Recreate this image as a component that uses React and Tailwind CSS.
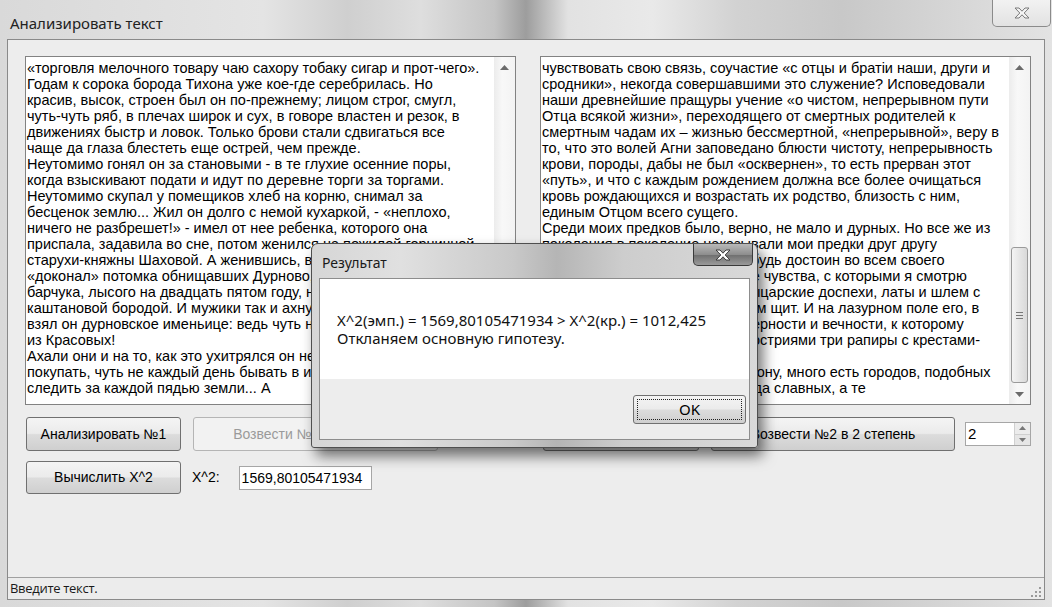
import React from "react";

// text shown in the two text boxes, one entry per visual line
const leftLines = [
  "«торговля мелочного товару чаю сахору тобаку сигар и прот-чего».",
  "Годам к сорока борода Тихона уже кое-где серебрилась. Но",
  "красив, высок, строен был он по-прежнему; лицом строг, смугл,",
  "чуть-чуть ряб, в плечах широк и сух, в говоре властен и резок, в",
  "движениях быстр и ловок. Только брови стали сдвигаться все",
  "чаще да глаза блестеть еще острей, чем прежде.",
  "Неутомимо гонял он за становыми - в те глухие осенние поры,",
  "когда взыскивают подати и идут по деревне торги за торгами.",
  "Неутомимо скупал у помещиков хлеб на корню, снимал за",
  "бесценок землю... Жил он долго с немой кухаркой, - «неплохо,",
  "ничего не разбрешет!» - имел от нее ребенка, которого она",
  "приспала, задавила во сне, потом женился на пожилой горничной",
  "старухи-княжны Шаховой. А женившись, взял приданое,",
  "«доконал» потомка обнищавших Дурново, ожиревшего",
  "барчука, лысого на двадцать пятом году, но с великолепной",
  "каштановой бородой. И мужики так и ахнули, когда",
  "взял он дурновское именьице: ведь чуть не вся Дурновка",
  "из Красовых!",
  "Ахали они и на то, как это ухитрялся он не только торговать и",
  "покупать, чуть не каждый день бывать в имении, но и",
  "следить за каждой пядью земли... А",
];

const rightLines = [
  "чувствовать свою связь, соучастие «с отцы и братіи наши, други и",
  "сродники», некогда совершавшими это служение? Исповедовали",
  "наши древнейшие пращуры учение «о чистом, непрерывном пути",
  "Отца всякой жизни», переходящего от смертных родителей к",
  "смертным чадам их – жизнью бессмертной, «непрерывной», веру в",
  "то, что это волей Агни заповедано блюсти чистоту, непрерывность",
  "крови, породы, дабы не был «осквернен», то есть прерван этот",
  "«путь», и что с каждым рождением должна все более очищаться",
  "кровь рождающихся и возрастать их родство, близость с ним,",
  "единым Отцом всего сущего.",
  "Среди моих предков было, верно, не мало и дурных. Но все же из",
  "поколения в поколение наказывали мои предки друг другу",
  "помнить и блюсти свою кровь: будь достоин во всем своего",
  "благородства… Знаете ли вы те чувства, с которыми я смотрю",
  "на наш старый родной герб? Рыцарские доспехи, латы и шлем с",
  "страусовыми перьями, а под ним щит. И на лазурном поле его, в",
  "середине – перстень, символ верности и вечности, к которому",
  "сходятся сверху, снизу своими остриями три рапиры с крестами-",
  "рукоятями.",
  "Есть на Руси, в ту степную сторону, много есть городов, подобных",
  "нашему, стариной и величием, да славных, а те",
];

const Arrow = ({ down }) => (
  <svg width="9" height="5" viewBox="0 0 9 5">
    <path d={down ? "M0 0H9L4.5 5Z" : "M0 5H9L4.5 0Z"} fill="#6b6b6b" />
  </svg>
);

function Scrollbar({ grip }) {
  return (
    <div className="w-[21px] flex flex-col bg-[linear-gradient(90deg,#ececec,#f8f8f8_40%,#f3f3f3)]">
      <div className="h-[21px] flex items-center justify-center">
        <Arrow />
      </div>
      <div className="flex-1 flex flex-col px-[2px]">
        <div className="h-[169px]" />
        <div className="h-[136px] rounded-[3px] border border-[#9a9a9a] bg-[linear-gradient(90deg,#f4f4f4,#e6e6e6_50%,#d9d9d9)] flex items-center justify-center">
          {grip && (
            <div className="flex flex-col gap-[2px]">
              <div className="w-[7px] h-px bg-[#777]" />
              <div className="w-[7px] h-px bg-[#777]" />
              <div className="w-[7px] h-px bg-[#777]" />
            </div>
          )}
        </div>
      </div>
      <div className="h-[20px] flex items-center justify-center">
        <Arrow down />
      </div>
    </div>
  );
}

function TextBox({ lines, grip }) {
  return (
    <div className="h-[349px] flex border border-[#828282] bg-white">
      <div className="flex-1 overflow-hidden pl-[1px] pt-[3px] text-[14.5px] leading-[16px] text-black">
        {lines.map((l, i) => (
          <div key={i} className="whitespace-nowrap h-[16px]">
            {l}
          </div>
        ))}
      </div>
      <Scrollbar grip={grip} />
    </div>
  );
}

function WinButton({ children, disabled, className }) {
  return (
    <div
      className={
        "flex items-center justify-center rounded-[3px] border text-[14px] " +
        (disabled
          ? "border-[#b5b5b5] bg-[#f2f2f2] text-[#9a9a9a] "
          : "border-[#707070] bg-[linear-gradient(180deg,#f4f4f4_0%,#ebebeb_48%,#dcdcdc_52%,#cfcfcf_100%)] text-black ") +
        className
      }
    >
      {children}
    </div>
  );
}

function Spinner({ value }) {
  return (
    <div className="w-[66px] h-[24px] flex border border-[#a6a6a6] bg-white self-center">
      <div className="flex-1 pl-[2px] text-[15px] leading-[22px]">{value}</div>
      <div className="w-[16px] flex flex-col border-l border-[#d0d0d0]">
        <div className="flex-1 flex items-center justify-center bg-[#ececec] border-b border-[#cfcfcf]">
          <svg width="7" height="4" viewBox="0 0 7 4"><path d="M0 4H7L3.5 0Z" fill="#777" /></svg>
        </div>
        <div className="flex-1 flex items-center justify-center bg-[#e6e6e6]">
          <svg width="7" height="4" viewBox="0 0 7 4"><path d="M0 0H7L3.5 4Z" fill="#777" /></svg>
        </div>
      </div>
    </div>
  );
}

function CloseGlyph({ solid }) {
  return (
    <svg width="16" height="12" viewBox="0 0 16 12">
      <path
        d="M1 1H5L8 4.2L11 1H15L10.2 6L15 11H11L8 7.8L5 11H1L5.8 6Z"
        fill={solid ? "#ffffff" : "#f4f4f4"}
        stroke={solid ? "#3d3d3d" : "#7a7a7a"}
        strokeWidth="1"
        strokeLinejoin="round"
      />
    </svg>
  );
}

function ResultDialog() {
  return (
    <div className="absolute left-[311px] top-[243px] w-[447px] h-[205px] rounded-t-[7px] rounded-b-[3px] border border-[#4f4f4f] bg-[linear-gradient(90deg,#d6d6d6,#e0e0e0_20%,#c9c9c9_45%,#b5b5b5_55%,#cdcdcd_70%,#d9d9d9)] shadow-[5px_8px_14px_rgba(0,0,0,0.55)] flex flex-col px-[7px] pb-[7px] font-['Noto_Sans',sans-serif]">
      <div className="h-[34px] flex items-start">
        <div className="pt-[8px] pl-[3px] text-[14px] text-[#1a1a1a] flex-1">Результат</div>
        <div className="w-[60px] h-[22px] -mr-[3px] rounded-b-[5px] border border-t-0 border-[#3a3a3a] bg-[linear-gradient(180deg,#b9b9b9,#8e8e8e_50%,#6f6f6f_52%,#9a9a9a)] flex items-center justify-center">
          <CloseGlyph solid />
        </div>
      </div>
      <div className="flex-1 flex flex-col border border-[#8d8d8d]">
        <div className="h-[100px] bg-white px-[17px] pt-[32px] text-[15px] leading-[18px] text-[#111]">
          <div className="whitespace-nowrap">X^2(эмп.) = 1569,80105471934 &gt; X^2(кр.) = 1012,425</div>
          <div className="whitespace-nowrap">Откланяем основную гипотезу.</div>
        </div>
        <div className="flex-1 bg-[#ededed] flex justify-end items-start pt-[16px] pr-[3px]">
          <WinButton className="w-[113px] h-[29px] relative">
            <div className="absolute inset-[3px] border border-dotted border-[#222]" />
            <span className="font-['Noto_Sans',sans-serif] text-[15px]">OK</span>
          </WinButton>
        </div>
      </div>
    </div>
  );
}

export default function App() {
  return (
    <div className="w-[1052px] h-[607px] relative overflow-hidden flex flex-col bg-[linear-gradient(90deg,#d9d9d9,#e4e4e4_25%,#cfcfcf_33%,#dedede_40%,#c4c4c4_47%,#9d9d9d_50%,#e2e2e2_54%,#e9e9e9_62%,#d2d2d2_70%,#c8c8c8_80%,#d8d8d8_92%,#e3e3e3)] font-['Liberation_Sans',Arial,sans-serif]">
      {/* title bar */}
      <div className="h-[39px] flex items-start">
        <div className="flex-1 pl-[10px] pt-[12px] text-[15px] text-[#222] font-['Noto_Sans',sans-serif]">
          Анализировать текст
        </div>
        <div className="w-[59px] h-[27px] mr-[1px] rounded-b-[5px] border border-t-0 border-[#8b8b8b] bg-[linear-gradient(180deg,#f2f2f2,#e2e2e2)] flex items-center justify-center">
          <CloseGlyph />
        </div>
      </div>

      {/* client area */}
      <div className="flex-1 mx-[7px] mb-[7px] flex flex-col border border-[#8a8a8a] bg-[#ededed]">
        <div className="flex-1 px-[17px] pt-[16px]">
          <div className="grid grid-cols-[491px_491px] gap-x-[24px]">
            <TextBox lines={leftLines} />
            <TextBox lines={rightLines} grip />
          </div>

          <div className="grid grid-cols-[491px_491px] gap-x-[24px] mt-[12px]">
            <div className="flex h-[34px] pl-[1px]">
              <WinButton className="w-[155px]">Анализировать №1</WinButton>
              <WinButton disabled className="w-[245px] ml-[12px]">Возвести №1 в 2 степень</WinButton>
              <div className="ml-[10px] flex">
                <Spinner value="2" />
              </div>
            </div>
            <div className="flex h-[34px] pl-[3px]">
              <WinButton className="w-[156px]">Анализировать №2</WinButton>
              <WinButton className="w-[244px] ml-[12px]">Возвести №2 в 2 степень</WinButton>
              <div className="ml-[10px] flex">
                <Spinner value="2" />
              </div>
            </div>
          </div>

          <div className="flex items-center mt-[10px] pl-[1px] h-[33px]">
            <WinButton className="w-[155px] h-[33px]">Вычислить X^2</WinButton>
            <div className="ml-[11px] text-[14px]">X^2:</div>
            <div className="ml-[19px] w-[133px] h-[24px] border border-[#a6a6a6] bg-white text-[14px] leading-[22px] pl-[2px]">
              1569,80105471934
            </div>
          </div>
        </div>

        {/* status bar */}
        <div className="h-[22px] border-t border-[#a0a0a0] bg-[#ececec] flex items-center justify-between pl-[2px] pr-[3px]">
          <div className="text-[13px] text-[#1a1a1a] font-['Open_Sans',sans-serif] tracking-[-0.3px]">Введите текст.</div>
          <svg width="10" height="10" viewBox="0 0 10 10" className="self-end mb-[2px]">
            <rect x="8" y="0" width="2" height="2" fill="#9a9a9a" />
            <rect x="4" y="4" width="2" height="2" fill="#9a9a9a" />
            <rect x="8" y="4" width="2" height="2" fill="#9a9a9a" />
            <rect x="0" y="8" width="2" height="2" fill="#9a9a9a" />
            <rect x="4" y="8" width="2" height="2" fill="#9a9a9a" />
            <rect x="8" y="8" width="2" height="2" fill="#9a9a9a" />
          </svg>
        </div>
      </div>

      <ResultDialog />
    </div>
  );
}
